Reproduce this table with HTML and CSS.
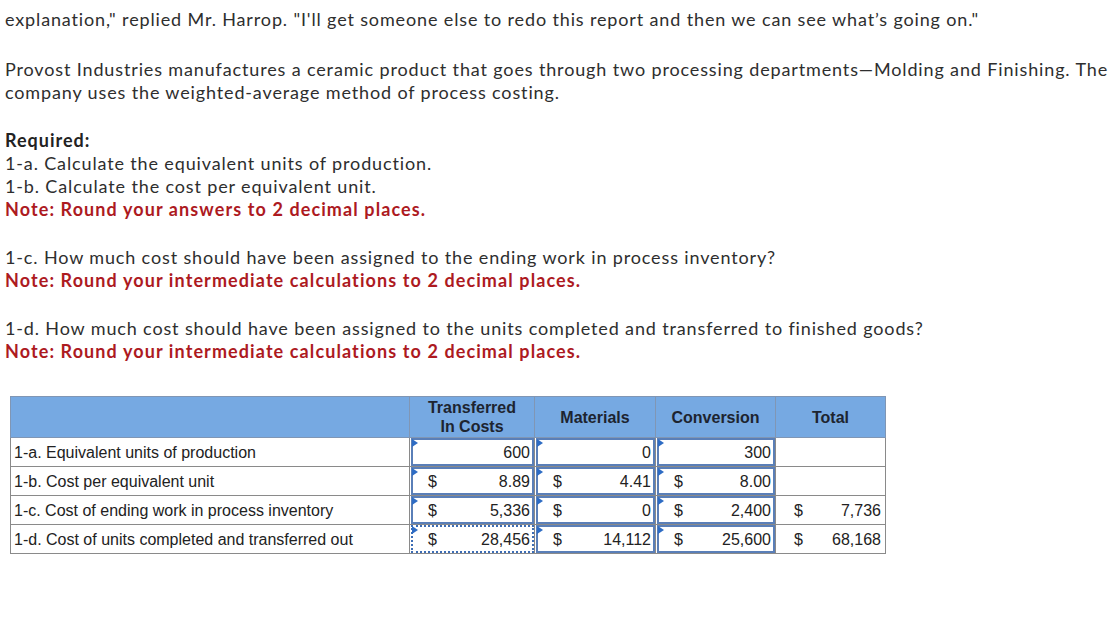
FILE: index.html
```html
<!DOCTYPE html>
<html lang="en">
<head>
<meta charset="utf-8">
<title>Provost Industries</title>
<link rel="stylesheet" href="styles.css">
</head>
<body>
<div class="page">
  <p class="para first">explanation," replied Mr. Harrop. "I'll get someone else to redo this report and then we can see what’s going on."</p>
  <p class="para">Provost Industries manufactures a ceramic product that goes through two processing departments—Molding and Finishing. The company uses the weighted-average method of process costing.</p>
  <div class="para">
    <div class="req">Required:</div>
    <div>1-a. Calculate the equivalent units of production.</div>
    <div>1-b. Calculate the cost per equivalent unit.</div>
    <div class="note">Note: Round your answers to 2 decimal places.</div>
  </div>
  <div class="para">
    <div>1-c. How much cost should have been assigned to the ending work in process inventory?</div>
    <div class="note">Note: Round your intermediate calculations to 2 decimal places.</div>
  </div>
  <div class="para">
    <div>1-d. How much cost should have been assigned to the units completed and transferred to finished goods?</div>
    <div class="note">Note: Round your intermediate calculations to 2 decimal places.</div>
  </div>

  <table class="grid">
    <colgroup>
      <col class="c-lab"><col class="c-tr"><col class="c-mat"><col class="c-conv"><col class="c-tot">
    </colgroup>
    <thead>
      <tr>
        <th></th>
        <th>Transferred<br>In Costs</th>
        <th>Materials</th>
        <th>Conversion</th>
        <th>Total</th>
      </tr>
    </thead>
    <tbody>
      <tr>
        <td class="lab">1-a. Equivalent units of production</td>
        <td class="in"><div class="box"><span class="cur"></span><span class="val">600</span></div></td>
        <td class="in"><div class="box"><span class="cur"></span><span class="val">0</span></div></td>
        <td class="in"><div class="box"><span class="cur"></span><span class="val">300</span></div></td>
        <td class="tot"></td>
      </tr>
      <tr>
        <td class="lab">1-b. Cost per equivalent unit</td>
        <td class="in"><div class="box"><span class="cur">$</span><span class="val">8.89</span></div></td>
        <td class="in"><div class="box"><span class="cur">$</span><span class="val">4.41</span></div></td>
        <td class="in"><div class="box"><span class="cur">$</span><span class="val">8.00</span></div></td>
        <td class="tot"></td>
      </tr>
      <tr>
        <td class="lab">1-c. Cost of ending work in process inventory</td>
        <td class="in"><div class="box"><span class="cur">$</span><span class="val">5,336</span></div></td>
        <td class="in"><div class="box"><span class="cur">$</span><span class="val">0</span></div></td>
        <td class="in"><div class="box"><span class="cur">$</span><span class="val">2,400</span></div></td>
        <td class="tot"><div class="plain"><span class="cur">$</span><span class="val">7,736</span></div></td>
      </tr>
      <tr>
        <td class="lab">1-d. Cost of units completed and transferred out</td>
        <td class="in"><div class="box focus"><span class="cur">$</span><span class="val">28,456</span></div></td>
        <td class="in"><div class="box"><span class="cur">$</span><span class="val">14,112</span></div></td>
        <td class="in"><div class="box"><span class="cur">$</span><span class="val">25,600</span></div></td>
        <td class="tot"><div class="plain"><span class="cur">$</span><span class="val">68,168</span></div></td>
      </tr>
    </tbody>
  </table>
</div>
</body>
</html>
```
FILE: styles.css
```css
html, body {
  margin: 0;
  padding: 0;
  background: #ffffff;
}

.page {
  padding: 8px 0 0 5px;
  font-family: "Lato", "Open Sans", sans-serif;
  font-size: 18px;
  line-height: 23px;
  letter-spacing: 0.86px;
  color: #2e2e2e;
}

.para {
  margin: 0 0 25px 0;
}

.para.first {
  margin-bottom: 27px;
}

.req {
  font-weight: 700;
  color: #222;
  letter-spacing: 1px;
}

.note {
  font-weight: 700;
  color: #ad1a1f;
  letter-spacing: 1.1px;
}

.grid {
  margin: 33px 0 0 5px;
  border-collapse: collapse;
  table-layout: fixed;
  width: 875px;
  font-family: "Liberation Sans", Arial, sans-serif;
  font-size: 16px;
  letter-spacing: 0;
  color: #222;
  border: 1px solid #8a8a8a;
}

.c-lab { width: 399px; }
.c-tr { width: 125px; }
.c-mat { width: 121px; }
.c-conv { width: 120px; }
.c-tot { width: 110px; }

.grid th {
  background: #76a9e2;
  height: 40px;
  padding: 0;
  font-weight: 700;
  font-size: 16px;
  line-height: 19px;
  color: #1d2430;
  border: 1px solid #8096b4;
  text-align: center;
  vertical-align: middle;
}

.grid td {
  height: 27px;
  padding: 0;
  border: 1px solid #8a8a8a;
  vertical-align: middle;
}

.grid td.lab {
  padding-left: 3px;
}

.box {
  position: relative;
  display: flex;
  align-items: center;
  height: 24px;
  margin: 0 0 0 1px;
  border: 2px solid #5a7fb8;
  padding: 0 2px 0 15px;
}

.box::before {
  content: "";
  position: absolute;
  left: -1px;
  top: -1px;
  border-top: 4px solid transparent;
  border-bottom: 4px solid transparent;
  border-left: 6px solid #2e6cc4;
}

.box.focus {
  border: 2px dotted #3d6db5;
}

.plain {
  display: flex;
  align-items: center;
  padding: 0 4px 0 18px;
}

.cur {
  flex: 0 0 auto;
}

.val {
  flex: 1 1 auto;
  text-align: right;
}
```
